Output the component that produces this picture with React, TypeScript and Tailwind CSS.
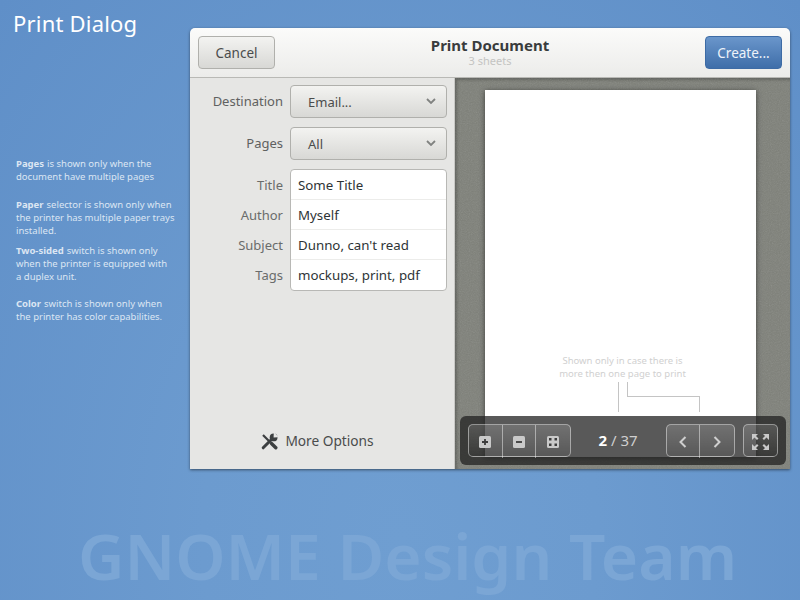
import { ReactNode } from "react";

const font = { fontFamily: '"Noto Sans", "Open Sans", sans-serif' };

const Select = ({ label, value }: { label: string; value: string }) => (
  <div className="flex items-start h-[34px]">
    <div className="w-[100px] self-center text-right text-[13px] text-[#5f6160] pr-[7px]">{label}</div>
    <div className="w-[157px] h-[33px] flex items-center justify-between pl-[17px] pr-[10px] rounded-[4px] border border-[#b0b0ac] bg-gradient-to-b from-[#f3f3f1] to-[#d8d8d5] text-[13px] text-[#4a4c4c]">
      <span className="pt-[3px]">{value}</span>
      <svg width="10" height="7" viewBox="0 0 10 7" fill="none" stroke="#808280" strokeWidth="1.800">
        <path d="M1 1l4 4 4-4" />
      </svg>
    </div>
  </div>
);

const FieldLabel = ({ children }: { children: ReactNode }) => (
  <div className="h-[30px] flex items-center justify-end pr-[7px] text-[13px] text-[#6a6c6b]">{children}</div>
);

const FieldValue = ({ children }: { children: ReactNode }) => (
  <div className="h-[30px] last:h-[29px] flex items-center pl-[7px] pt-[3px] text-[13.300px] text-[#2e3436] border-b border-[#ececea] last:border-b-0">
    {children}
  </div>
);

const Note = ({ title, first, rest, className }: { title: string; first: string; rest: string[]; className: string }) => (
  <div className={`text-[9.500px] leading-[13px] text-[#dce6f3] whitespace-nowrap ${className}`}>
    <div className="flex gap-[3px]">
      <b className="font-bold">{title}</b>
      <span>{first}</span>
    </div>
    {rest.map((line) => (
      <div key={line}>{line}</div>
    ))}
  </div>
);

const ToolButton = ({ children }: { children: ReactNode }) => (
  <div className="w-[33.500px] h-[33px] flex items-center justify-center">{children}</div>
);

const groupClass =
  "flex h-[33px] rounded-[5px] border border-white/45 bg-gradient-to-b from-white/15 to-white/0 divide-x divide-white/45";

const ZoomIcon = ({ kind }: { kind: "in" | "out" | "fit" }) => (
  <svg width="12" height="12" viewBox="0 0 12 12">
    <rect width="12" height="12" rx="1.500" fill="#c9c9c9" />
    {kind === "in" && <path d="M3 6h6M6 3v6" stroke="#3c3c3c" strokeWidth="1.800" />}
    {kind === "out" && <path d="M3 6h6" stroke="#3c3c3c" strokeWidth="1.800" />}
    {kind === "fit" && <path d="M2 2h2.500v2.500H2zM7.500 2H10v2.500H7.500zM2 7.500h2.500V10H2zM7.500 7.500H10V10H7.500z" fill="#3c3c3c" />}
  </svg>
);

export default function App() {
  return (
    <div
      className="w-[800px] h-[600px] overflow-hidden flex bg-[radial-gradient(ellipse_at_50%_90%,#6f9ed1_0%,#6c9bcf_35%,#5f8fc8_100%)]"
      style={font}
    >
      <aside className="w-[190px] shrink-0 pl-[13px]">
        <h1 className="pt-[8px] text-[22px] leading-[30px] text-white tracking-[0.2px]">Print Dialog</h1>
        <div className="pl-[3px] pt-[119px]">
          <Note title="Pages" first="is shown only when the" rest={["document have multiple pages"]} className="" />
          <Note
            className="mt-[15px]"
            title="Paper"
            first="selector is shown only when"
            rest={["the printer has multiple paper trays", "installed."]}
          />
          <Note
            className="mt-[7px]"
            title="Two-sided"
            first="switch is shown only"
            rest={["when the printer is equipped with", "a duplex unit."]}
          />
          <Note
            className="mt-[14px]"
            title="Color"
            first="switch is shown only when"
            rest={["the printer has color capabilities."]}
          />
        </div>
      </aside>

      <div className="relative flex-1">
        <div className="w-[600px] h-[441px] mt-[28px] flex flex-col rounded-t-[5px] overflow-hidden shadow-[0_1px_3px_rgba(0,0,0,0.5)]">
          <header className="h-[50px] shrink-0 flex items-center justify-between px-[8px] border-b border-[#b9b9b5] bg-gradient-to-b from-[#fbfbfa] to-[#ececea]">
            <button className="w-[77px] h-[33px] pt-px rounded-[4px] border border-[#b0b0ac] bg-gradient-to-b from-[#f3f3f1] to-[#d8d8d5] text-[13.500px] text-[#4a4c4c]">
              Cancel
            </button>
            <div className="text-center">
              <div className="text-[15px] leading-[17px] font-bold text-[#393c3d]">Print Document</div>
              <div className="text-[11px] leading-[14px] text-[#c4c4c2]">3 sheets</div>
            </div>
            <button className="w-[77px] h-[33px] pt-px rounded-[4px] border border-[#3d6ba5] bg-gradient-to-b from-[#6a96cb] to-[#3f6ea9] text-[13.500px] text-[#eef3f9]">
              Create...
            </button>
          </header>

          <div className="flex-1 flex min-h-0">
            <section className="w-[265px] shrink-0 flex flex-col bg-[#e6e6e4] border-r border-[#c9c9c6] pt-[7px]">
              <div className="flex flex-col gap-[8px]">
                <Select label="Destination" value="Email..." />
                <Select label="Pages" value="All" />
              </div>
              <div className="flex mt-[8px]">
                <div className="w-[100px] pt-[2px]">
                  <FieldLabel>Title</FieldLabel>
                  <FieldLabel>Author</FieldLabel>
                  <FieldLabel>Subject</FieldLabel>
                  <FieldLabel>Tags</FieldLabel>
                </div>
                <div className="w-[157px] rounded-[4px] border border-[#b8b8b5] bg-white">
                  <FieldValue>Some Title</FieldValue>
                  <FieldValue>Myself</FieldValue>
                  <FieldValue>Dunno, can't read</FieldValue>
                  <FieldValue>mockups, print, pdf</FieldValue>
                </div>
              </div>
              <div className="mt-auto mb-[17px] flex items-center justify-center gap-[7px] pr-[9px] text-[13.700px] text-[#4a4c4c]">
                <svg width="17" height="17" viewBox="0 0 17 17">
                  <path d="M2 2l7 7" stroke="#3c3f40" strokeWidth="2.200" />
                  <path d="M10.500 10.500 14.800 14.800" stroke="#3c3f40" strokeWidth="3.400" strokeLinecap="round" />
                  <path d="M2.200 14.800 10.500 6.500" stroke="#3c3f40" strokeWidth="3" strokeLinecap="round" />
                  <circle cx="12.600" cy="4.400" r="3.900" fill="#3c3f40" />
                  <path d="M12.600 4.400 12.800 -1 18 4.200z" fill="#e6e6e4" />
                </svg>
                <span>More Options</span>
              </div>
            </section>

            <section className="relative flex-1 overflow-hidden bg-[#7e8079] shadow-[inset_2px_2px_3px_rgba(0,0,0,0.25)] pl-[30px] pt-[12px]">
              <svg className="absolute inset-0 w-full h-full opacity-[0.18]">
                <filter id="grain">
                  <feTurbulence type="fractalNoise" baseFrequency="0.9" numOctaves="2" />
                  <feColorMatrix type="saturate" values="0" />
                </filter>
                <rect width="100%" height="100%" filter="url(#grain)" />
              </svg>
              <div className="relative w-[271px] h-[367px] bg-white shadow-[0_1px_5px_rgba(0,0,0,0.55)]">
                <p className="pt-[265px] pl-[4px] text-center text-[9.500px] leading-[12.700px] text-[#d0d0d0]">
                  Shown only in case there is
                  <br />
                  more then one page to print
                </p>
                <span className="absolute left-[133px] top-[292px] w-px h-[30px] bg-[#c4c4c4]" />
                <span className="absolute left-[142px] top-[292px] w-[72px] h-[15px] border-l border-b border-[#c4c4c4]" />
                <span className="absolute left-[214px] top-[306px] w-px h-[16px] bg-[#c4c4c4]" />
              </div>

              <div className="absolute left-[5px] bottom-[4px] w-[326px] h-[49px] flex items-center pl-[8px] rounded-[6px] bg-[#222222]/75">
                <div className={groupClass}>
                  <ToolButton><ZoomIcon kind="in" /></ToolButton>
                  <ToolButton><ZoomIcon kind="out" /></ToolButton>
                  <ToolButton><ZoomIcon kind="fit" /></ToolButton>
                </div>
                <div className="w-[95px] text-center text-[15px] text-[#cfcfcf]">
                  <b className="text-white">2</b> / 37
                </div>
                <div className={groupClass}>
                  <ToolButton>
                    <svg width="8" height="12" viewBox="0 0 8 12" fill="none" stroke="#cfcfcf" strokeWidth="2">
                      <path d="M6.500 1 1.500 6l5 5" />
                    </svg>
                  </ToolButton>
                  <ToolButton>
                    <svg width="8" height="12" viewBox="0 0 8 12" fill="none" stroke="#cfcfcf" strokeWidth="2">
                      <path d="M1.500 1l5 5-5 5" />
                    </svg>
                  </ToolButton>
                </div>
                <div className={`${groupClass} ml-[8px]`}>
                  <ToolButton>
                    <svg width="17" height="16" viewBox="0 0 17 16" fill="#c9c9c9">
                      <path d="M0 0h6L4 2l2.500 2.500-1.500 1.500L2.500 3.500 0 6zM17 0h-6l2 2-2.500 2.500L12 6l2.500-2.500L17 6zM0 16h6l-2-2 2.500-2.500L5 10l-2.500 2.500L0 10zM17 16h-6l2-2-2.500-2.500L12 10l2.500 2.500L17 10z" />
                    </svg>
                  </ToolButton>
                </div>
              </div>
            </section>
          </div>
        </div>

        <div className="mt-[49px] -ml-[112px] text-[64px] leading-[76px] font-semibold whitespace-nowrap text-[#7ba6d5]">
          GNOME Design Team
        </div>
      </div>
    </div>
  );
}
